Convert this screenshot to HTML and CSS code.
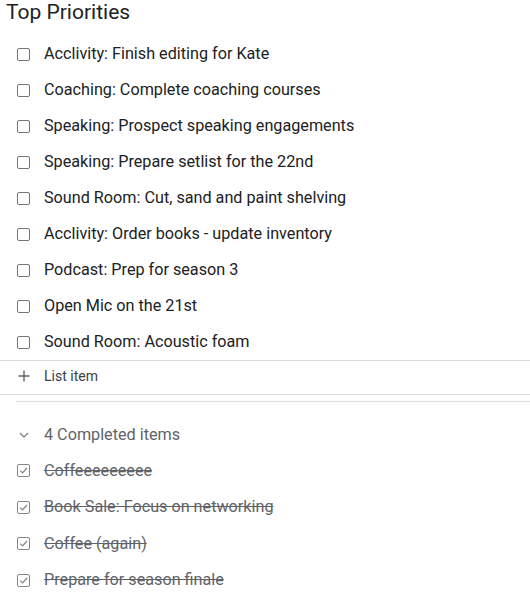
FILE: index.html
```html
<!DOCTYPE html>
<html>
<head>
<meta charset="utf-8">
<link rel="stylesheet" href="styles.css">
</head>
<body>
<div class="note">
  <h1 class="title">Top Priorities</h1>
  <ul class="list">
    <li class="row"><span class="box"></span><span class="text">Acclivity: Finish editing for Kate</span></li>
    <li class="row"><span class="box"></span><span class="text">Coaching: Complete coaching courses</span></li>
    <li class="row"><span class="box"></span><span class="text">Speaking: Prospect speaking engagements</span></li>
    <li class="row"><span class="box"></span><span class="text">Speaking: Prepare setlist for the 22nd</span></li>
    <li class="row"><span class="box"></span><span class="text">Sound Room: Cut, sand and paint shelving</span></li>
    <li class="row"><span class="box"></span><span class="text">Acclivity: Order books - update inventory</span></li>
    <li class="row"><span class="box"></span><span class="text">Podcast: Prep for season 3</span></li>
    <li class="row"><span class="box"></span><span class="text">Open Mic on the 21st</span></li>
    <li class="row"><span class="box"></span><span class="text">Sound Room: Acoustic foam</span></li>
  </ul>
  <div class="add">
    <svg class="plus" width="12" height="12" viewBox="0 0 12 12"><path d="M6 0.5V11.5M0.5 6H11.5" stroke="#5f6368" stroke-width="1.4" fill="none"/></svg>
    <span class="add-text">List item</span>
  </div>
  <div class="sep"></div>
  <div class="done-head">
    <svg class="chev" width="10" height="6" viewBox="0 0 10 6"><path d="M1 1L5 5L9 1" stroke="#80868b" stroke-width="1.4" fill="none"/></svg>
    <span class="done-title">4 Completed items</span>
  </div>
  <ul class="list done">
    <li class="row"><span class="box checked"><svg width="11" height="11" viewBox="0 0 11 11"><path d="M2.2 5.6L4.6 7.9L8.9 3" stroke="#80868b" stroke-width="1.3" fill="none"/></svg></span><span class="text">Coffeeeeeeeee</span></li>
    <li class="row"><span class="box checked"><svg width="11" height="11" viewBox="0 0 11 11"><path d="M2.2 5.6L4.6 7.9L8.9 3" stroke="#80868b" stroke-width="1.3" fill="none"/></svg></span><span class="text">Book Sale: Focus on networking</span></li>
    <li class="row"><span class="box checked"><svg width="11" height="11" viewBox="0 0 11 11"><path d="M2.2 5.6L4.6 7.9L8.9 3" stroke="#80868b" stroke-width="1.3" fill="none"/></svg></span><span class="text">Coffee (again)</span></li>
    <li class="row"><span class="box checked"><svg width="11" height="11" viewBox="0 0 11 11"><path d="M2.2 5.6L4.6 7.9L8.9 3" stroke="#80868b" stroke-width="1.3" fill="none"/></svg></span><span class="text">Prepare for season finale</span></li>
  </ul>
</div>
</body>
</html>
```

FILE: styles.css
```css
html, body {
  margin: 0;
  padding: 0;
  background: #ffffff;
}
body {
  width: 530px;
  font-family: Roboto, "Noto Sans", Arial, sans-serif;
  color: #202124;
}
.title {
  margin: 0;
  padding: 0 0 0 6px;
  height: 36px;
  font-family: Roboto, "Open Sans", sans-serif;
  font-weight: 400;
  font-size: 21px;
  line-height: 25px;
  color: #202124;
}
.list {
  list-style: none;
  margin: 0;
  padding: 0;
}
.row {
  height: 36px;
  display: flex;
  align-items: center;
}
.box {
  width: 11px;
  height: 11px;
  border: 1.5px solid #757575;
  border-radius: 2px;
  margin-left: 17px;
  margin-right: 14px;
  flex: none;
  display: flex;
  align-items: center;
  justify-content: center;
}
.box.checked {
  border-color: #80868b;
}
.box svg {
  display: block;
}
.text {
  font-size: 16.2px;
  line-height: 20px;
  color: #202124;
}
.add {
  border-top: 1px solid #dadce0;
  border-bottom: 1px solid #dadce0;
  height: 35px;
  display: flex;
  align-items: center;
  box-sizing: border-box;
}
.plus {
  margin-left: 18px;
  margin-right: 14px;
  flex: none;
  margin-top: -3px;
}
.add-text {
  font-size: 14px;
  color: #3c4043;
  margin-top: -3px;
}
.sep {
  margin: 6px 0 0 16px;
  border-top: 1px solid #e0e0e0;
}
.done-head {
  height: 50.5px;
  padding-top: 15px;
  box-sizing: border-box;
  display: flex;
  align-items: center;
}
.chev {
  margin-left: 19px;
  margin-right: 15px;
  flex: none;
}
.done-title {
  font-size: 16.2px;
  color: #5f6368;
}
.done .row {
  height: 36.5px;
}
.done .text {
  color: #5f6368;
  text-decoration: line-through;
}
```
